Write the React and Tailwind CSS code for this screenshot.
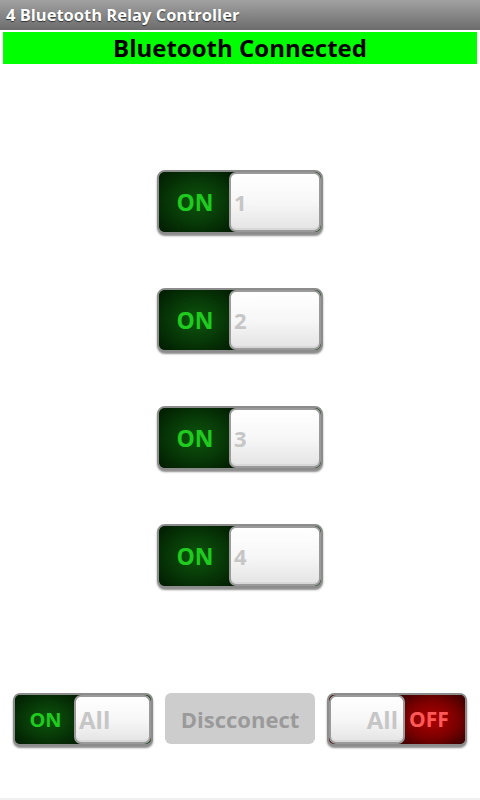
const Knob = ({ label, align = 'left', size = 'text-[22px]' }) => {
  return (
    <div
      className={`flex-1 h-full flex items-center rounded-[7px] border-2 border-[#9a9a9a] bg-gradient-to-b from-white via-[#f7f7f7] to-[#e4e4e4] shadow-[inset_0_3px_0_#ffffff,inset_0_-2px_0_#d8d8d8] ${
        align === 'left' ? 'justify-start pl-[3px]' : 'justify-end pr-[5px]'
      }`}
    >
      <span className={`${size} font-bold text-[#c6c6c6] leading-none`}>{label}</span>
    </div>
  );
};

const RelayToggle = ({ num }) => {
  return (
    <div className="w-[166px] h-[64px] flex rounded-[8px] border-2 border-[#8c8c8c] bg-[#0a3a0a] shadow-[0_2px_2px_rgba(0,0,0,0.45)] overflow-hidden">
      <div className="w-[76px] h-full flex items-center justify-center -mr-[6px] bg-[radial-gradient(ellipse_at_center,#0d560d_0%,#063306_60%,#011a01_100%)]">
        <span className="text-[23px] font-bold text-[#1ecb1e] leading-none pr-[4px]">ON</span>
      </div>
      <div className="relative flex-1 h-full">
        <Knob label={num} />
      </div>
    </div>
  );
};

const App = () => {
  return (
    <div className="w-[480px] h-[800px] bg-white flex flex-col font-['Open_Sans','Liberation_Sans',sans-serif] overflow-hidden">
      <div className="h-[30px] shrink-0 bg-gradient-to-b from-[#a2a2a2] to-[#6c6c6c] flex items-center pl-[6px]">
        <span className="text-white font-bold text-[16.5px] leading-none [text-shadow:0_1px_1px_rgba(0,0,0,0.6)]">
          4 Bluetooth Relay Controller
        </span>
      </div>
      <div className="mx-[3px] mt-[2px] h-[32px] shrink-0 bg-[#00ff00] flex items-center justify-center">
        <span className="text-[24px] font-bold text-black leading-none">Bluetooth Connected</span>
      </div>

      <div className="flex flex-col items-center gap-[54px] mt-[106px]">
        <RelayToggle num="1" />
        <RelayToggle num="2" />
        <RelayToggle num="3" />
        <RelayToggle num="4" />
      </div>

      <div className="flex items-start mt-[105px] pl-[13px] gap-[12px]">
        <div className="w-[140px] h-[53px] flex rounded-[7px] border-2 border-[#8c8c8c] bg-[#0a3a0a] shadow-[0_2px_2px_rgba(0,0,0,0.45)] overflow-hidden">
          <div className="w-[65px] h-full flex items-center justify-center -mr-[6px] bg-[radial-gradient(ellipse_at_center,#0d560d_0%,#063306_60%,#011a01_100%)]">
            <span className="text-[20px] font-bold text-[#1ecb1e] leading-none pr-[4px]">ON</span>
          </div>
          <div className="flex-1 h-full">
            <Knob label="All" size="text-[24px]" />
          </div>
        </div>

        <button className="w-[150px] h-[51px] rounded-[6px] bg-[#cdcdcd] flex items-center justify-center">
          <span className="text-[22px] font-bold text-[#9a9a9a] leading-none">Discconect</span>
        </button>

        <div className="w-[140px] h-[53px] flex rounded-[7px] border-2 border-[#8c8c8c] bg-[#3a0000] shadow-[0_2px_2px_rgba(0,0,0,0.45)] overflow-hidden">
          <div className="relative z-10 flex-1 h-full">
            <Knob label="All" align="right" size="text-[24px]" />
          </div>
          <div className="w-[66px] h-full flex items-center justify-start pl-[10px] -ml-[6px] bg-[radial-gradient(ellipse_at_center,#b00000_0%,#7a0000_55%,#350000_100%)]">
            <span className="text-[21px] font-bold text-[#ff5a5a] leading-none">OFF</span>
          </div>
        </div>
      </div>

      <div className="mt-auto h-[2px] bg-[#f0f0f0]" />
    </div>
  );
};

export default App;
